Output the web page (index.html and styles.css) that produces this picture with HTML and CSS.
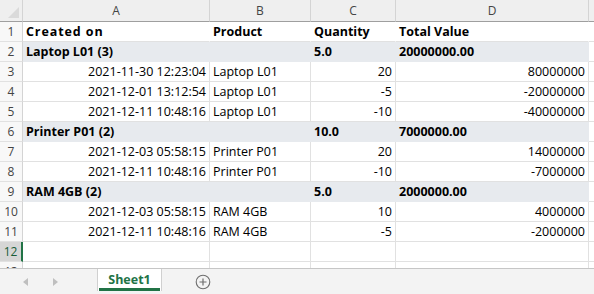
FILE: index.html
```html
<!DOCTYPE html>
<html>
<head>
<meta charset="utf-8">
<link rel="stylesheet" href="styles.css">
</head>
<body>
<div class="sheet">
  <div class="corner"><span class="tri"></span></div>
  <div class="ch">A</div><div class="ch">B</div><div class="ch">C</div><div class="ch">D</div><div class="ch ch-last"></div>

  <div class="rh">1</div>
  <div class="c hdr b wide">Created on</div><div class="c hdr b">Product</div><div class="c hdr b">Quantity</div><div class="c hdr b">Total Value</div><div class="c e"></div>

  <div class="rh">2</div>
  <div class="c grp b">Laptop L01 (3)</div><div class="c grp"></div><div class="c grp b">5.0</div><div class="c grp b">20000000.00</div><div class="c e"></div>

  <div class="rh">3</div>
  <div class="c num">2021-11-30 12:23:04</div><div class="c">Laptop L01</div><div class="c num">20</div><div class="c num">80000000</div><div class="c e"></div>

  <div class="rh">4</div>
  <div class="c num">2021-12-01 13:12:54</div><div class="c">Laptop L01</div><div class="c num">-5</div><div class="c num">-20000000</div><div class="c e"></div>

  <div class="rh">5</div>
  <div class="c num">2021-12-11 10:48:16</div><div class="c">Laptop L01</div><div class="c num">-10</div><div class="c num">-40000000</div><div class="c e"></div>

  <div class="rh">6</div>
  <div class="c grp b">Printer P01 (2)</div><div class="c grp"></div><div class="c grp b">10.0</div><div class="c grp b">7000000.00</div><div class="c e"></div>

  <div class="rh">7</div>
  <div class="c num">2021-12-03 05:58:15</div><div class="c">Printer P01</div><div class="c num">20</div><div class="c num">14000000</div><div class="c e"></div>

  <div class="rh">8</div>
  <div class="c num">2021-12-11 10:48:16</div><div class="c">Printer P01</div><div class="c num">-10</div><div class="c num">-7000000</div><div class="c e"></div>

  <div class="rh">9</div>
  <div class="c grp b">RAM 4GB (2)</div><div class="c grp"></div><div class="c grp b">5.0</div><div class="c grp b">2000000.00</div><div class="c e"></div>

  <div class="rh">10</div>
  <div class="c num">2021-12-03 05:58:15</div><div class="c">RAM 4GB</div><div class="c num">10</div><div class="c num">4000000</div><div class="c e"></div>

  <div class="rh">11</div>
  <div class="c num">2021-12-11 10:48:16</div><div class="c">RAM 4GB</div><div class="c num">-5</div><div class="c num">-2000000</div><div class="c e"></div>

  <div class="rh sel">12</div>
  <div class="c"></div><div class="c"></div><div class="c"></div><div class="c"></div><div class="c e"></div>

  <div class="rh">13</div>
  <div class="c"></div><div class="c"></div><div class="c"></div><div class="c"></div><div class="c e"></div>
</div>
<div class="tabbar">
  <div class="nav">
    <svg class="arrow" width="6" height="8" viewBox="0 0 6 8"><path d="M5 0 L0 4 L5 8 Z" fill="#bfbfbf"/></svg>
    <svg class="arrow" width="6" height="8" viewBox="0 0 6 8"><path d="M1 0 L6 4 L1 8 Z" fill="#bfbfbf"/></svg>
  </div>
  <div class="tab"><span class="tab-label">Sheet1</span></div>
  <div class="add">
    <svg width="16" height="16" viewBox="0 0 16 16"><circle cx="8" cy="8" r="6.8" fill="none" stroke="#6e6e6e" stroke-width="1.1"/><path d="M8 4.5 V11.5 M4.5 8 H11.5" stroke="#6e6e6e" stroke-width="1.2"/></svg>
  </div>
</div>
</body>
</html>
```

FILE: styles.css
```css
html, body {
  margin: 0;
  padding: 0;
  background: #ffffff;
  width: 594px;
  height: 294px;
  overflow: hidden;
  font-family: "Open Sans", "Noto Sans", sans-serif;
}

.sheet {
  display: grid;
  grid-template-columns: 23px 187px 101px 85px 193px 1fr;
  grid-template-rows: 22px;
  grid-auto-rows: 20px;
  height: 268px;
  overflow: hidden;
  font-size: 12.5px;
  color: #000;
}

.corner {
  background: #efefef;
  border-right: 1px solid #d4d4d4;
  border-bottom: 1px solid #9f9f9f;
  box-sizing: border-box;
  position: relative;
}

.tri {
  position: absolute;
  right: 3px;
  bottom: 3px;
  width: 0;
  height: 0;
  border-left: 11px solid transparent;
  border-bottom: 11px solid #dadada;
}

.ch {
  background: #efefef;
  border-right: 1px solid #d4d4d4;
  border-bottom: 1px solid #9f9f9f;
  box-sizing: border-box;
  display: flex;
  align-items: center;
  justify-content: center;
  color: #444;
  font-size: 12px;
}

.ch-last {
  border-right: none;
}

.rh {
  background: #f8f8f8;
  border-right: 1px solid #d4d4d4;
  border-bottom: 1px solid #e1e1e1;
  box-sizing: border-box;
  display: flex;
  align-items: center;
  justify-content: center;
  color: #444;
  font-size: 12px;
}

.rh.sel {
  background: #d6d6d6;
  border-right: 2px solid #217346;
  color: #185c37;
}

.c {
  border-right: 1px solid #e1e1e1;
  border-bottom: 1px solid #e1e1e1;
  box-sizing: border-box;
  display: flex;
  align-items: center;
  padding: 0 3px;
  white-space: nowrap;
  overflow: hidden;
}

.c.e {
  border-right: none;
}

.hdr {
  border-right-color: #ffffff;
}

.wide {
  letter-spacing: 0.9px;
}

.grp {
  background: #e7eaee;
  border-right-color: #e7eaee;
  border-bottom-color: #e7eaee;
}

.b {
  font-weight: 700;
}

.num {
  justify-content: flex-end;
}

.tabbar {
  height: 26px;
  box-sizing: border-box;
  border-top: 1px solid #c6c6c6;
  background: #f3f3f3;
  display: flex;
  align-items: stretch;
}

.nav {
  width: 97px;
  display: flex;
  align-items: center;
  gap: 23px;
  padding-left: 23px;
  box-sizing: border-box;
}

.arrow {
  display: block;
}

.tab {
  width: 65px;
  height: 22px;
  background: #ffffff;
  border-left: 1px solid #d0d0d0;
  border-right: 1px solid #d0d0d0;
  box-sizing: border-box;
  display: flex;
  align-items: center;
  justify-content: center;
  position: relative;
}

.tab::after {
  content: "";
  position: absolute;
  left: 1px;
  right: 1px;
  bottom: 0;
  height: 3px;
  background: #217346;
}

.tab-label {
  color: #217346;
  font-weight: 700;
  font-size: 12.5px;
  margin-top: -2px;
}

.add {
  display: flex;
  align-items: center;
  padding-left: 33px;
}

.add svg {
  display: block;
}
```
